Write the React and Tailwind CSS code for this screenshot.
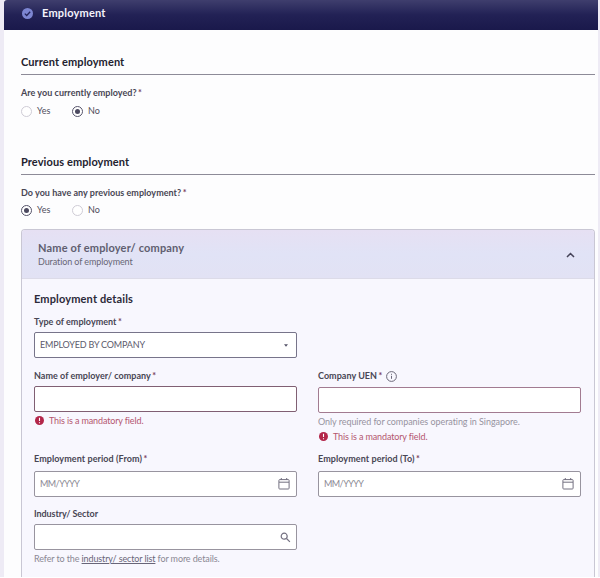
const inputBase = 'flex items-center justify-between h-[26px] rounded-[2px] border bg-white px-[5px]'

function SectionTitle({ children }) {
    return (
        <h2 className="h-[26px] border-b border-[#8d8b98] text-[11px] leading-[26px] font-bold tracking-[0.1px] text-[#23222f]">
            {children}
        </h2>
    )
}

function Label({ children, required, tracking = 'tracking-[0.03px]' }) {
    return (
        <span className={`text-[9px] font-bold whitespace-nowrap text-[#484654] ${tracking}`}>
            {children}
            {required && <span className="ml-[1.5px] text-[#7a3f5c]">*</span>}
        </span>
    )
}

function Radio({ label, checked }) {
    return (
        <label className="flex w-[51px] items-center gap-[5px] text-[9px] text-[#504e5c]">
            <span
                className={`flex h-[11px] w-[11px] items-center justify-center rounded-full border bg-white ${checked ? 'border-[#55536a]' : 'border-[#cfccd6]'}`}
            >
                {checked && <span className="h-[5px] w-[5px] rounded-full bg-[#4c4a60]" />}
            </span>
            {label}
        </label>
    )
}

function ErrorText() {
    return (
        <p className="flex h-[15px] items-center gap-[5px] pl-[1px] text-[9px] tracking-[-0.13px] text-[#b4566f]">
            <svg width="9" height="9" viewBox="0 0 9 9">
                <circle cx="4.5" cy="4.5" r="4.5" fill="#b3264a" />
                <path d="M4.5 1.8v3.2M4.5 6.2v1" stroke="#fff" strokeWidth="1.1" />
            </svg>
            This is a mandatory field.
        </p>
    )
}

function CalendarIcon() {
    return (
        <svg className="mr-px" width="12" height="12" viewBox="0 0 12 12" fill="none" stroke="#737080">
            <rect x="0.9" y="1.6" width="10.2" height="9.4" rx="0.8" />
            <path d="M1 4.2h10M3.3 0v2M8.7 0v2" />
        </svg>
    )
}

function DateInput() {
    return (
        <div className={`${inputBase} mt-[5px] border-[#98949f]`}>
            <span className="text-[9px] tracking-[-0.55px] text-[#8b8894]">MM/YYYY</span>
            <CalendarIcon />
        </div>
    )
}

export default function App() {
    return (
        <div className="h-[577px] overflow-hidden bg-[#eeebf5] pr-[2px] pl-[4px] font-['Lato','Liberation_Sans',sans-serif]">
            <div className="h-[577px] bg-[#fdfdfe]">
                <header className="flex h-[30px] items-center gap-[9px] rounded-tl-[3px] bg-linear-to-b from-[#3f3e6d] via-[#222155] to-[#1a194b] pb-[3px] pl-[18px]">
                    <svg width="11" height="11" viewBox="0 0 11 11" fill="none">
                        <circle cx="5.5" cy="5.5" r="5.5" fill="#7d86d2" />
                        <path d="M2.8 5.6l1.9 1.9 3.5-3.8" stroke="#24245a" strokeWidth="1.3" />
                    </svg>
                    <h1 className="text-[11px] font-bold tracking-[0.2px] text-[#f4f3fb]">Employment</h1>
                </header>

                <main className="pr-[3px] pl-[17px]">
                    <section className="h-[100px] pt-[19px]">
                        <SectionTitle>Current employment</SectionTitle>
                        <div className="mt-[11px] flex h-[14px] items-center">
                            <Label required>Are you currently employed?</Label>
                        </div>
                        <div className="mt-[4px] flex h-[14px] items-center">
                            <Radio label="Yes" />
                            <Radio label="No" checked />
                        </div>
                    </section>

                    <section className="h-[99px] pt-[19px]">
                        <SectionTitle>Previous employment</SectionTitle>
                        <div className="mt-[11px] flex h-[14px] items-center">
                            <Label required>Do you have any previous employment?</Label>
                        </div>
                        <div className="mt-[3px] flex h-[14px] items-center">
                            <Radio label="Yes" checked />
                            <Radio label="No" />
                        </div>
                    </section>

                    <section className="h-[360px] rounded-t-[4px] border border-b-0 border-[#c9c7d4] bg-[#f8f7fe]">
                        <div className="flex h-[49px] items-center justify-between rounded-t-[3px] border-b border-[#dcdbe8] bg-linear-to-b from-[#e6e0f3] via-[#e1e3f6] to-[#e2e2f4] pt-[2px] pr-[19px] pl-[16px]">
                            <div>
                                <h3 className="text-[11px] leading-[14px] font-bold tracking-[0.18px] text-[#605e70]">Name of employer/ company</h3>
                                <p className="text-[9px] leading-[14px] tracking-[-0.1px] text-[#686675]">Duration of employment</p>
                            </div>
                            <svg width="9" height="6" viewBox="0 0 9 6" fill="none" stroke="#454358" strokeWidth="1.5">
                                <path d="M1 5l3.5-3.5L8 5" />
                            </svg>
                        </div>

                        <div className="px-[12px] pt-[12px]">
                            <h3 className="h-[16px] text-[11px] leading-[16px] font-bold tracking-[0.15px] text-[#2c2a3a]">Employment details</h3>

                            <div className="grid grid-cols-[263px_263px] gap-x-[21px]">
                                <div className="h-[62px]">
                                    <div className="mt-[8px] flex h-[14px] items-center">
                                        <Label required>Type of employment</Label>
                                    </div>
                                    <div className={`${inputBase} mt-[3px] border-[#77748a]`}>
                                        <span className="text-[9px] tracking-[-0.18px] text-[#5c5a6c]">EMPLOYED BY COMPANY</span>
                                        <svg className="mr-[3px]" width="4" height="3" viewBox="0 0 5 3">
                                            <path d="M0 0h5L2.5 3z" fill="#555368" />
                                        </svg>
                                    </div>
                                </div>

                                <div className="col-start-1 h-[83px]">
                                    <div className="flex h-[14px] items-center">
                                        <Label required>Name of employer/ company</Label>
                                    </div>
                                    <div className={`${inputBase} mt-[3px] mb-px border-[#805f73]`} />
                                    <ErrorText />
                                </div>
                                <div className="h-[83px]">
                                    <div className="flex h-[14px] items-center gap-[4px]">
                                        <Label required>Company UEN</Label>
                                        <svg width="11" height="11" viewBox="0 0 11 11" fill="none" stroke="#6b6879">
                                            <circle cx="5.5" cy="5.5" r="4.9" />
                                            <path d="M5.5 4.8v3M5.5 2.8v1" />
                                        </svg>
                                    </div>
                                    <div className={`${inputBase} mt-[4px] mb-px border-[#a27b91]`} />
                                    <p className="h-[15px] text-[9px] leading-[15px] tracking-[-0.06px] text-[#9793a0]">
                                        Only required for companies operating in Singapore.
                                    </p>
                                    <ErrorText />
                                </div>

                                <div className="h-[55px]">
                                    <div className="flex h-[14px] items-center">
                                        <Label required tracking="tracking-[0.08px]">Employment period (From)</Label>
                                    </div>
                                    <DateInput />
                                </div>
                                <div className="h-[55px]">
                                    <div className="flex h-[14px] items-center">
                                        <Label required tracking="tracking-[0.08px]">Employment period (To)</Label>
                                    </div>
                                    <DateInput />
                                </div>

                                <div>
                                    <div className="flex h-[14px] items-center">
                                        <Label tracking="tracking-[-0.08px]">Industry/ Sector</Label>
                                    </div>
                                    <div className={`${inputBase} mt-[3px] mb-px justify-end border-[#98949f]`}>
                                        <svg width="11" height="11" viewBox="0 0 11 11" fill="none" stroke="#737080" strokeWidth="1.2">
                                            <circle cx="4.2" cy="4.2" r="3" />
                                            <path d="M6.5 6.5l3.4 3.4" />
                                        </svg>
                                    </div>
                                    <p className="h-[15px] text-[9px] leading-[15px] tracking-[-0.12px] text-[#8b8894]">
                                        Refer to the <a className="text-[#686578] underline">industry/ sector list</a> for more details.
                                    </p>
                                </div>
                            </div>
                        </div>
                    </section>
                </main>
            </div>
        </div>
    )
}
